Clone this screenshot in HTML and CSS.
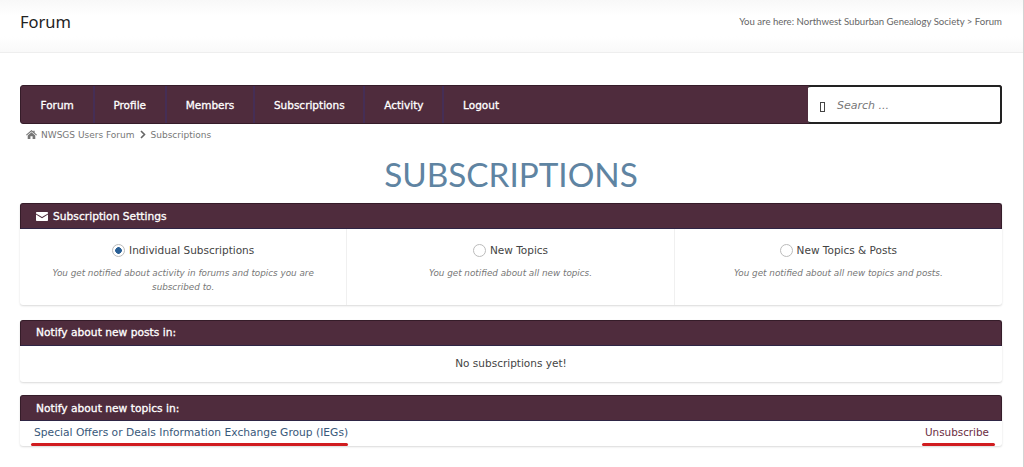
FILE: index.html
```html
<!DOCTYPE html>
<html lang="en">
<head>
    <meta charset="UTF-8">
    <meta name="viewport" content="width=device-width, initial-scale=1.0">
    <title>Forum</title>
    <link rel="stylesheet" href="styles.css">
</head>
<body>
    <header class="page-header">
        <h1>Forum</h1>
        <p class="trail">You are here: Northwest Suburban Genealogy Society &gt; Forum</p>
    </header>
    <main class="content">
        <nav class="menu">
            <ul class="menu-links">
                <li><a href="#">Forum</a></li>
                <li><a href="#">Profile</a></li>
                <li><a href="#">Members</a></li>
                <li><a href="#">Subscriptions</a></li>
                <li><a href="#">Activity</a></li>
                <li><a href="#">Logout</a></li>
            </ul>
            <div class="search">
                <span class="search-icon"></span>
                <span class="search-text">Search ...</span>
            </div>
        </nav>

        <div class="breadcrumb">
            <svg class="home-icon" viewBox="0 0 16 13" width="11" height="9"><path d="M8 0 L10.6 2.3 V1 H12.6 V4 L16 7 L15 8 L8 2 L1 8 L0 7 Z M2.5 8 L8 3.3 L13.5 8 V13 H9.6 V9 H6.4 V13 H2.5 Z" fill="#777"/></svg>
            <span>NWSGS Users Forum</span>
            <svg class="crumb-arrow" viewBox="0 0 6 9" width="6" height="9"><path d="M1 1 L4.5 4.5 L1 8" fill="none" stroke="#666" stroke-width="1.6"/></svg>
            <span>Subscriptions</span>
        </div>

        <h2 class="page-title">SUBSCRIPTIONS</h2>

        <section class="panel settings">
            <h3 class="panel-head with-icon">
                <svg viewBox="0 0 12 9" width="12" height="9"><path d="M0.8 0 H11.2 Q12 0 12 0.8 V1.4 L6 5 L0 1.4 V0.8 Q0 0 0.8 0 Z M0 2.6 L6 6.2 L12 2.6 V8.2 Q12 9 11.2 9 H0.8 Q0 9 0 8.2 Z" fill="#fff"/></svg>
                Subscription Settings
            </h3>
            <div class="options">
                <div class="option">
                    <div class="option-label"><span class="radio checked"></span>Individual Subscriptions</div>
                    <p>You get notified about activity in forums and topics you are subscribed to.</p>
                </div>
                <div class="option">
                    <div class="option-label"><span class="radio"></span>New Topics</div>
                    <p>You get notified about all new topics.</p>
                </div>
                <div class="option">
                    <div class="option-label"><span class="radio"></span>New Topics &amp; Posts</div>
                    <p>You get notified about all new topics and posts.</p>
                </div>
            </div>
        </section>

        <section class="panel posts">
            <h3 class="panel-head">Notify about new posts in:</h3>
            <div class="empty">No subscriptions yet!</div>
        </section>

        <section class="panel topics">
            <h3 class="panel-head">Notify about new topics in:</h3>
            <div class="topic-row">
                <a class="topic-link" href="#">Special Offers or Deals Information Exchange Group (IEGs)</a>
                <a class="unsub-link" href="#">Unsubscribe</a>
            </div>
        </section>
    </main>
</body>
</html>
```

FILE: styles.css
```css
html, body {
    height: 100%;
}

body {
    margin: 0;
    padding: 0;
    background: #fff;
    color: #444;
    font-family: 'DejaVu Sans', sans-serif;
    font-size: 11px;
    overflow: hidden;
    border-right: 1px solid #d4d4d4;
    box-sizing: border-box;
}

a {
    text-decoration: none;
}

.page-header {
    display: flex;
    justify-content: space-between;
    align-items: flex-start;
    height: 52px;
    padding: 0 21px 0 20px;
    background: linear-gradient(#f8f8f8, #fff 30%, #fff 70%, #f9f9f9);
    border-bottom: 1px solid #eee;
}

.page-header h1 {
    margin: 11px 0 0;
    color: #222;
    font-family: 'Noto Sans', sans-serif;
    font-size: 16.5px;
    font-weight: 400;
    line-height: 22px;
}

.trail {
    margin: 15px 0 0;
    color: #666;
    font-family: 'Lato', sans-serif;
    font-size: 9.6px;
    line-height: 14px;
}

.content {
    padding: 32px 21px 0 20px;
}

.menu {
    display: flex;
    justify-content: space-between;
    height: 39px;
    background: #4f2c3d;
    border: 1px solid #351c29;
    border-radius: 3px;
    box-sizing: border-box;
}

.menu-links {
    display: flex;
    margin: 0;
    padding: 0;
    list-style: none;
}

.menu-links li {
    border-right: 2px solid #452e55;
}

.menu-links li:last-child {
    border-right: none;
}

.menu-links a {
    display: block;
    padding: 0 18.8px;
    color: #fff;
    font-size: 10.5px;
    line-height: 38px;
    -webkit-text-stroke: 0.3px #fff;
}

.menu-links li:first-child a {
    padding-left: 19.5px;
}

.search {
    display: flex;
    align-items: center;
    width: 194px;
    height: 39px;
    margin: -1px -1px 0 0;
    background: #fff;
    border: 2px solid #222;
    border-left: none;
    border-radius: 3px;
    box-sizing: border-box;
}

.search-icon {
    width: 3px;
    height: 8px;
    margin: 5px 12px 0 12px;
    border: 1px solid #444;
}

.search-text {
    margin-top: 1px;
    color: #777;
    font-style: italic;
    font-size: 11px;
}

.breadcrumb {
    display: flex;
    align-items: center;
    height: 21px;
    padding-left: 6px;
    color: #777;
    font-size: 9px;
}

.home-icon {
    margin-right: 4px;
}

.crumb-arrow {
    margin: 0 5px;
}

.page-title {
    margin: 9px 0 0;
    color: #5f84a2;
    font-family: 'Lato', sans-serif;
    font-size: 33.3px;
    font-weight: 400;
    line-height: 40px;
    text-align: center;
}

.panel {
    position: relative;
    background: #fff;
    border-radius: 3px;
    box-shadow: 0 1px 2px rgba(0, 0, 0, 0.15);
}

.panel-head {
    display: flex;
    align-items: center;
    height: 26px;
    margin: 0;
    padding-left: 15px;
    background: #4f2c3d;
    border: 1px solid #351c29;
    border-bottom-color: #2e2545;
    border-radius: 3px 3px 0 0;
    box-sizing: border-box;
    color: #fff;
    font-size: 10.7px;
    font-weight: 400;
    -webkit-text-stroke: 0.3px #fff;
}

.panel-head.with-icon svg {
    margin-right: 5px;
}

.settings {
    margin-top: 9px;
}

.options {
    display: grid;
    grid-template-columns: repeat(3, 1fr);
    height: 76px;
}

.option {
    padding: 14px 28px 0;
    border-right: 1px solid #f0f0f0;
    text-align: center;
}

.option:last-child {
    border-right: none;
}

.option-label {
    display: flex;
    justify-content: center;
    align-items: center;
    height: 14px;
    color: #444;
    font-size: 10.5px;
}

.option p {
    margin: 9px 0 0;
    color: #777;
    font-size: 8.8px;
    font-style: italic;
    line-height: 14px;
}

.radio {
    width: 11px;
    height: 11px;
    margin-right: 4px;
    border: 1px solid #bbb;
    border-radius: 50%;
    background: #fff;
}

.radio.checked {
    background: radial-gradient(circle, #2a6096 0, #2a6096 3px, #fff 3.6px);
}

.posts {
    margin-top: 15px;
}

.posts .panel-head {
    padding-bottom: 1px;
}

.empty {
    height: 36px;
    line-height: 34px;
    color: #444;
    font-size: 10.5px;
    text-align: center;
}

.topics {
    margin-top: 13px;
}

.topic-row {
    display: flex;
    justify-content: space-between;
    height: 25px;
    padding: 0 13px 0 14px;
    line-height: 23px;
    font-size: 10.7px;
}

.topic-link {
    position: relative;
    color: #38587a;
}

.unsub-link {
    position: relative;
    color: #6b2d3f;
    font-size: 10.4px;
}

/* red marker strokes drawn over the screenshot */
.topic-link::after,
.unsub-link::after {
    content: "";
    position: absolute;
    left: -3px;
    right: 0;
    top: 22px;
    height: 3px;
    background: #d01c1f;
    border-radius: 2px;
}

.unsub-link::after {
    right: -6px;
}
```
